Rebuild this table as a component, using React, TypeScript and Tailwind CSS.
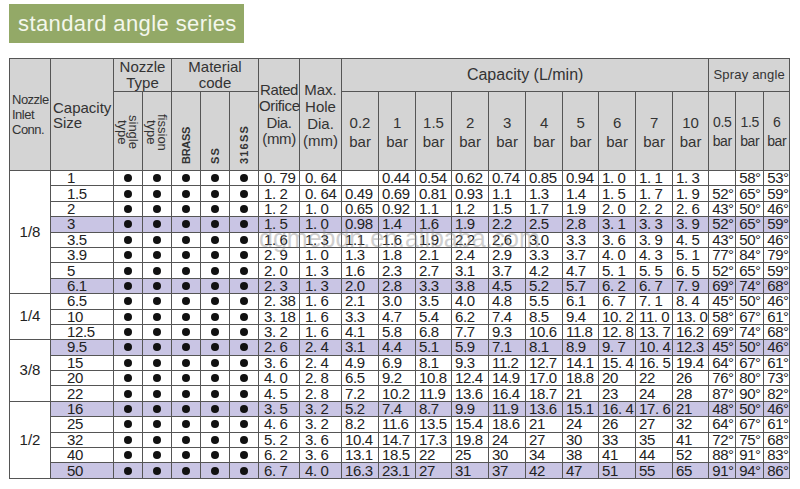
import React from "react";

type Row = {
  size: string;
  rated: string;
  hole: string;
  cap: string[];
  spray: string[];
  hl?: boolean;
};

type Group = { inlet: string; rows: Row[] };

function r(size: string, rated: string, hole: string, cap: string, spray: string, hl = false): Row {
  return { size, rated, hole, cap: cap.split("|"), spray: spray.split("|"), hl };
}

const groups: Group[] = [
  {
    inlet: "1/8",
    rows: [
      r("1", "0. 79", "0. 64", "|0.44|0.54|0.62|0.74|0.85|0.94|1. 0|1. 1|1. 3", "|58°|53°"),
      r("1.5", "1. 2", "0. 64", "0.49|0.69|0.81|0.93|1.1|1.3|1.4|1. 5|1. 7|1. 9", "52°|65°|59°"),
      r("2", "1. 2", "1. 0", "0.65|0.92|1.1|1.2|1.5|1.7|1.9|2. 0|2. 2|2. 6", "43°|50°|46°"),
      r("3", "1. 5", "1. 0", "0.98|1.4|1.6|1.9|2.2|2.5|2.8|3. 1|3. 3|3. 9", "52°|65°|59°", true),
      r("3.5", "1. 6", "1. 3", "1.1|1.6|1.9|2.2|2.6|3.0|3.3|3. 6|3. 9|4. 5", "43°|50°|46°"),
      r("3.9", "2. 9", "1. 0", "1.3|1.8|2.1|2.4|2.9|3.3|3.7|4. 0|4. 3|5. 1", "77°|84°|79°"),
      r("5", "2. 0", "1. 3", "1.6|2.3|2.7|3.1|3.7|4.2|4.7|5. 1|5. 5|6. 5", "52°|65°|59°"),
      r("6.1", "2. 3", "1. 3", "2.0|2.8|3.3|3.8|4.5|5.2|5.7|6. 2|6. 7|7. 9", "69°|74°|68°", true),
    ],
  },
  {
    inlet: "1/4",
    rows: [
      r("6.5", "2. 38", "1. 6", "2.1|3.0|3.5|4.0|4.8|5.5|6.1|6. 7|7. 1|8. 4", "45°|50°|46°"),
      r("10", "3. 18", "1. 6", "3.3|4.7|5.4|6.2|7.4|8.5|9.4|10. 2|11. 0|13. 0", "58°|67°|61°"),
      r("12.5", "3. 2", "1. 6", "4.1|5.8|6.8|7.7|9.3|10.6|11.8|12. 8|13. 7|16.2", "69°|74°|68°"),
    ],
  },
  {
    inlet: "3/8",
    rows: [
      r("9.5", "2. 6", "2. 4", "3.1|4.4|5.1|5.9|7.1|8.1|8.9|9. 7|10. 4|12.3", "45°|50°|46°", true),
      r("15", "3. 6", "2. 4", "4.9|6.9|8.1|9.3|11.2|12.7|14.1|15. 4|16. 5|19.4", "64°|67°|61°"),
      r("20", "4. 0", "2. 8", "6.5|9.2|10.8|12.4|14.9|17.0|18.8|20|22|26", "76°|80°|73°"),
      r("22", "4. 5", "2. 8", "7.2|10.2|11.9|13.6|16.4|18.7|21|23|24|28", "87°|90°|82°"),
    ],
  },
  {
    inlet: "1/2",
    rows: [
      r("16", "3. 5", "3. 2", "5.2|7.4|8.7|9.9|11.9|13.6|15.1|16. 4|17. 6|21", "48°|50°|46°", true),
      r("25", "4. 6", "3. 2", "8.2|11.6|13.5|15.4|18.6|21|24|26|27|32", "64°|67°|61°"),
      r("32", "5. 2", "3. 6", "10.4|14.7|17.3|19.8|24|27|30|33|35|41", "72°|75°|68°"),
      r("40", "6. 2", "3. 6", "13.1|18.5|22|25|30|34|38|41|44|52", "88°|91°|83°"),
      r("50", "6. 7", "4. 0", "16.3|23.1|27|31|37|42|47|51|55|65", "91°|94°|86°", true),
    ],
  },
];

const colWidths = [41, 63, 29, 29, 29, 29, 29, 41, 42, 37, 37, 36, 37, 37, 37, 36, 37, 37, 36, 27, 28, 26];
const pressures = ["0.2", "1", "1.5", "2", "3", "4", "5", "6", "7", "10"];
const sprayBars = ["0.5", "1.5", "6"];

const cell = "border border-[#555] p-0";
const head = "border border-[#555] p-0 bg-[#d4d4d4] text-[#333]";
const num = "whitespace-pre text-[15px] leading-[14px] tracking-[-0.4px] text-[#222]";

function Dot() {
  return <span className="inline-block h-[8px] w-[8px] rounded-full bg-[#111]" />;
}

function BodyRow({ row, inlet, span }: { row: Row; inlet?: string; span?: number }) {
  const bg = row.hl ? "bg-[#c9c5e4]" : "bg-white";
  return (
    <tr className="h-[15.4px]">
      {inlet && (
        <td rowSpan={span} className={`${cell} bg-white text-center align-middle text-[15px] text-[#222]`}>
          {inlet}
        </td>
      )}
      <td className={`${cell} ${bg} ${num} pl-[16px]`}>{row.size}</td>
      {[0, 1, 2, 3, 4].map((i) => (
        <td key={i} className={`${cell} ${bg} text-center leading-[0]`}>
          <Dot />
        </td>
      ))}
      <td className={`${cell} ${bg} ${num} pl-[5px]`}>{row.rated}</td>
      <td className={`${cell} ${bg} ${num} pl-[5px]`}>{row.hole}</td>
      {row.cap.map((v, i) => (
        <td key={i} className={`${cell} ${bg} ${num} pl-[3px]`}>
          {v}
        </td>
      ))}
      {row.spray.map((v, i) => (
        <td key={i} className={`${cell} ${bg} ${num} pl-[3px]`}>
          {v}
        </td>
      ))}
    </tr>
  );
}

function TypeLabel({ children }: { children: React.ReactNode }) {
  return (
    <div className="flex h-[77px] items-center justify-center pt-[3px]">
      <span className="h-[38px] text-center text-[13px] leading-[11px] [writing-mode:vertical-rl]">{children}</span>
    </div>
  );
}

function Material({ name, wide }: { name: string; wide?: boolean }) {
  return (
    <div className="flex h-[77px] items-end justify-center pb-[5px]">
      <span
        className={`h-fit rotate-180 text-[11px] font-bold leading-none [writing-mode:vertical-rl] ${
          wide ? "tracking-[1.2px]" : "tracking-[-0.3px]"
        }`}
      >
        {name}
      </span>
    </div>
  );
}

export default function App() {
  return (
    <div className="relative h-[489px] w-[800px] overflow-hidden bg-white font-['Liberation_Sans',Arial,sans-serif]">
      <div className="ml-[9px] mt-[4px] flex h-[39px] w-[235px] items-center bg-[#93a967] pl-[9px]">
        <span className="text-[22px] leading-none tracking-[0.4px] text-[#f4f7ec]">standard angle series</span>
      </div>

      <table className="ml-[9px] mt-[15px] w-[780px] table-fixed border-collapse">
        <colgroup>
          {colWidths.map((w, i) => (
            <col key={i} style={{ width: w }} />
          ))}
        </colgroup>
        <thead>
          <tr className="h-[33px]">
            <th rowSpan={2} className={`${head} pl-[2px] text-left align-middle text-[13px] font-normal leading-[15px] tracking-[-0.5px]`}>
              Nozzle
              <br />
              Inlet
              <br />
              Conn.
            </th>
            <th rowSpan={2} className={`${head} pl-[2px] text-left align-middle text-[15px] font-normal leading-[15px]`}>
              Capacity
              <br />
              Size
            </th>
            <th colSpan={2} className={`${head} text-center align-middle text-[15px] font-normal leading-[16px]`}>
              Nozzle
              <br />
              Type
            </th>
            <th colSpan={3} className={`${head} text-center align-middle text-[15px] font-normal leading-[16px]`}>
              Material
              <br />
              code
            </th>
            <th rowSpan={2} className={`${head} text-center align-middle text-[15px] font-normal leading-[16.5px] tracking-[-0.4px]`}>
              Rated
              <br />
              Orifice
              <br />
              Dia.
              <br />
              (mm)
            </th>
            <th rowSpan={2} className={`${head} text-center align-middle text-[15px] font-normal leading-[17px]`}>
              Max.
              <br />
              Hole
              <br />
              Dia.
              <br />
              (mm)
            </th>
            <th colSpan={10} className={`${head} text-center align-middle text-[16px] font-normal`}>
              Capacity (L/min)
            </th>
            <th colSpan={3} className={`${head} text-center align-middle text-[13px] font-normal tracking-[0.2px]`}>
              Spray angle
            </th>
          </tr>
          <tr className="h-[79px]">
            <th className={`${head} align-top font-normal`}>
              <TypeLabel>
                single
                <br />
                type
              </TypeLabel>
            </th>
            <th className={`${head} align-top font-normal`}>
              <TypeLabel>
                fission
                <br />
                type
              </TypeLabel>
            </th>
            <th className={`${head} align-top`}>
              <Material name="BRASS" />
            </th>
            <th className={`${head} align-top`}>
              <Material name="SS" wide />
            </th>
            <th className={`${head} align-top`}>
              <Material name="316SS" wide />
            </th>
            {pressures.map((p) => (
              <th key={p} className={`${head} pt-[2px] text-center align-middle text-[15px] font-normal leading-[19px]`}>
                {p}
                <br />
                bar
              </th>
            ))}
            {sprayBars.map((p) => (
              <th key={p} className={`${head} pt-[2px] text-center align-middle text-[14px] font-normal leading-[19px] tracking-[-0.4px]`}>
                {p}
                <br />
                bar
              </th>
            ))}
          </tr>
        </thead>
        <tbody>
          {groups.map((g) =>
            g.rows.map((row, i) => (
              <BodyRow key={g.inlet + row.size} row={row} inlet={i === 0 ? g.inlet : undefined} span={g.rows.length} />
            ))
          )}
        </tbody>
      </table>

      <span className="pointer-events-none absolute left-[259px] top-[226px] text-[25px] leading-none text-[#8a8a8a] opacity-40">
        dgmebdn.en.alibaba.com
      </span>
    </div>
  );
}
